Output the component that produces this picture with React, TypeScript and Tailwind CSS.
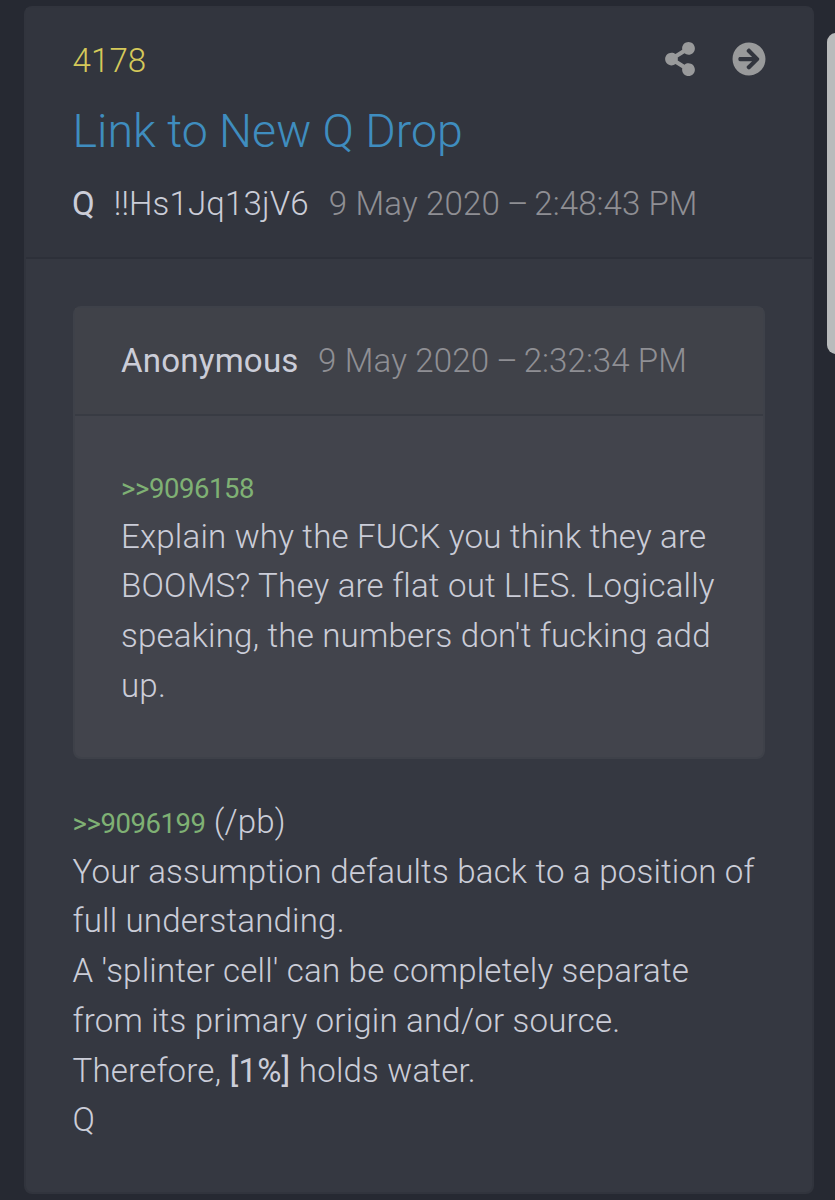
import type { ReactNode } from 'react'
import { FaArrowCircleRight, FaShareAlt } from 'react-icons/fa'

interface LinesProps {
  lines: ReactNode[]
}

function Lines({ lines }: LinesProps) {
  return (
    <>
      {lines.map((line, i) => (
        <div key={i} className="whitespace-nowrap">{line}</div>
      ))}
    </>
  )
}

function Reference({ id }: { id: string }) {
  return (
    <a href="#" className="text-[27.5px] leading-none font-normal tracking-[-0.45px] text-[#7fb174]">
      &gt;&gt;{id}
    </a>
  )
}

function PostTime({ date, time }: { date: string; time: string }) {
  return (
    <time className="text-[#8f8f94]">
      <span className="tracking-[0.15px]">{date}</span>
      <span className="tracking-[-1.1px]"> – </span>
      <span className="tracking-[0.05px]">{time}</span>
    </time>
  )
}

function Quote() {
  return (
    <div className="h-[453px] rounded-lg border-2 border-[#3e4149] bg-[#42444c]">
      <div className="flex h-[108px] items-start gap-5 border-b-2 border-[#383b43] bg-[#404249] px-[46px] pt-[28px] whitespace-nowrap">
        <span className="-mr-[0.5px] font-[450] tracking-[0.2px]">Anonymous</span>
        <PostTime date="9 May 2020" time="2:32:34 PM" />
      </div>
      <div className="px-[46px] pt-[46px] tracking-[0.19px]">
        <Lines
          lines={[
            <Reference id="9096158" />,
            'Explain why the FUCK you think they are',
            'BOOMS? They are flat out LIES. Logically',
            "speaking, the numbers don't fucking add",
            'up.',
          ]}
        />
      </div>
    </div>
  )
}

export default function App() {
  return (
    <div className="relative h-[1200px] w-[835px] overflow-hidden bg-[#262932] pt-[6px] pl-[24px] font-['Roboto',sans-serif] text-[33.1px] leading-[49.7px] font-light text-[#cbcdd8]">
      <article className="h-[1188px] w-[790px] rounded-lg border-2 border-[#31343d] bg-[#353841]">
        <header className="h-[251px] border-b-2 border-[#2d3039] bg-[#32353e] px-[46px] pt-[28px]">
          <div className="flex items-center justify-between">
            <span className="pl-[0.5px] tracking-[0.1px] text-[#d5c95a]">4178</span>
            <div className="mb-[3px] flex items-center gap-[35px] text-[#999a9b]">
              <FaShareAlt size={34} />
              <FaArrowCircleRight size={34} />
            </div>
          </div>
          <h1 className="-mt-[2px] pl-[0.5px] text-[46.5px] leading-[95px] text-[#3f8dbf]">Link to New Q Drop</h1>
          <div className="flex gap-5 whitespace-nowrap">
            <span className="-mr-[1px] font-[450]">Q</span>
            <span className="tracking-[0.15px]">!!Hs1Jq13jV6</span>
            <PostTime date="9 May 2020" time="2:48:43 PM" />
          </div>
        </header>

        <div className="px-[47px] pt-[47px]">
          <Quote />
          <div className="-ml-[0.5px] pt-[38px] tracking-[0.19px]">
            <Lines
              lines={[
                <><Reference id="9096199" /> (/pb)</>,
                'Your assumption defaults back to a position of',
                'full understanding.',
                "A 'splinter cell' can be completely separate",
                'from its primary origin and/or source.',
                <>Therefore, <strong className="font-[450]">[1%]</strong> holds water.</>,
                'Q',
              ]}
            />
          </div>
        </div>
      </article>

      {/* Scrollbar thumb, runs off the right edge */}
      <div className="absolute top-[33px] left-[827px] h-[321px] w-[18px] rounded-[9px] bg-[#b9bbbc]" />
    </div>
  )
}
